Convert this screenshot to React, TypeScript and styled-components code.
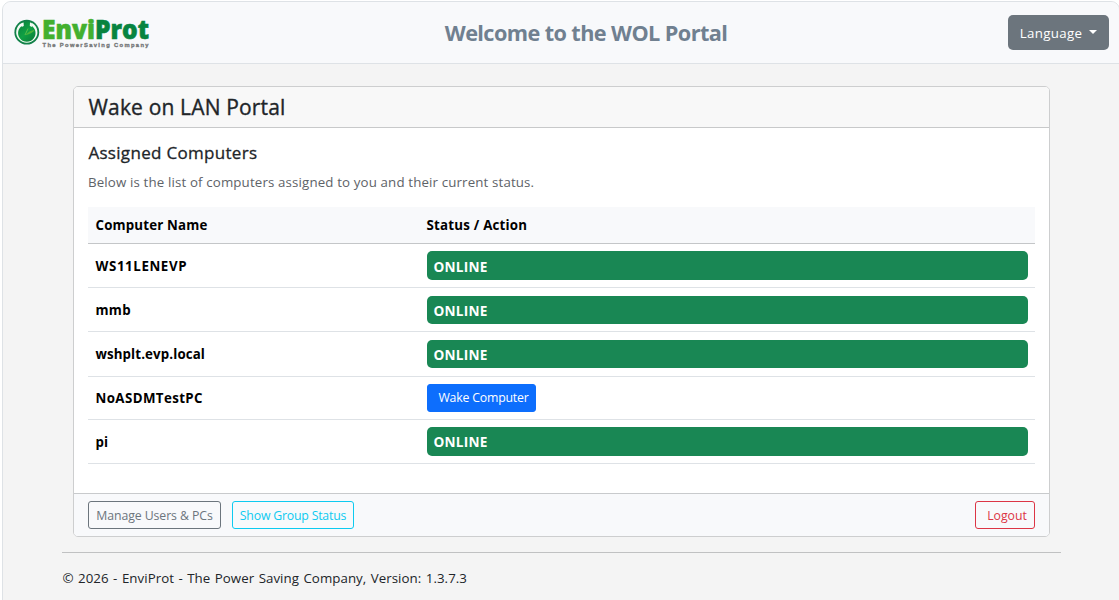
import React from 'react';
import styled, { createGlobalStyle } from 'styled-components';

const Global = createGlobalStyle`
  *, *::before, *::after { box-sizing: border-box; }
  html, body { margin: 0; height: 100%; overflow: hidden; background: #fff; }
  body { font-family: "Segoe UI", "Open Sans", "Noto Sans", sans-serif; font-size: 13.3px; color: #212529; }
  h1, h2, h3, p { margin: 0; white-space: nowrap; }
`;

const Page = styled.div`
  margin: 1px 0 0 2px;
  width: 1118px;
  height: 620px;
  border: 1px solid #dee2e6;
  border-radius: 9px;
  background: #f4f4f4;
  overflow: hidden;
`;

const TopBar = styled.header`
  display: grid;
  grid-template-columns: 200px 1fr 150px;
  align-items: center;
  height: 62px;
  padding: 0 10px 0 11px;
  background: #f8f9fb;
  border-bottom: 1px solid #dee2e6;
`;

const Welcome = styled.h1`
  justify-self: center;
  margin-left: -1px;
  font-size: 21.7px;
  line-height: 30px;
  font-weight: 700;
  letter-spacing: -0.6px;
  color: #708090;
`;

const LanguageButton = styled.button`
  justify-self: end;
  display: flex;
  align-items: center;
  justify-content: center;
  gap: 7px;
  width: 101px;
  height: 35px;
  padding: 0;
  border: 0;
  border-radius: 5px;
  background: #6c757d;
  color: #fff;
  font: 400 13.3px "Segoe UI", "Open Sans", sans-serif;
  letter-spacing: 0.32px;
  &::after {
    content: '';
    border: 4px solid transparent;
    border-top-color: #fff;
    border-bottom: 0;
    margin-bottom: 2px;
  }
`;

const Card = styled.main`
  display: flex;
  flex-direction: column;
  width: 977px;
  height: 451px;
  margin: 22px 0 0 70px;
  border: 1px solid #cdcecf;
  border-radius: 5px;
  background: #fff;
  overflow: hidden;
`;

const CardHeader = styled.div`
  height: 41px;
  padding: 0 14px;
  border-bottom: 1px solid #c8c9ca;
  background: #f8f8f8;
`;

const CardTitle = styled.h2`
  padding-left: 0.5px;
  font-size: 21px;
  line-height: 40px;
  font-weight: 500;
  letter-spacing: 0.16px;
  -webkit-text-stroke: 0.35px currentColor;
`;

const CardBody = styled.div`
  flex: 1;
  padding: 12px 14px 0;
`;

const Subtitle = styled.h3`
  padding-left: 0.4px;
  font-size: 17px;
  line-height: 26px;
  font-weight: 500;
  letter-spacing: 0.31px;
  -webkit-text-stroke: 0.3px currentColor;
`;

const Hint = styled.p`
  margin-top: 6px;
  line-height: 20px;
  color: #5e6368;
  letter-spacing: 0.14px;
`;

const Table = styled.div`
  margin-top: 15px;
  font-weight: 700;
  color: #000;
`;

const Row = styled.div<{ $height: number; $head?: boolean }>`
  display: grid;
  grid-template-columns: 331px 1fr;
  align-items: center;
  height: ${p => p.$height}px;
  padding: 0 7px;
  border-bottom: 1px solid ${p => (p.$head ? '#c4c6c8' : '#dee2e6')};
  background: ${p => (p.$head ? '#f8f9fb' : '#fff')};
  white-space: nowrap;
`;

const Cell = styled.span<{ $spacing?: number }>`
  padding-left: 0.5px;
  line-height: 20px;
  letter-spacing: ${p => p.$spacing ?? 0}px;
`;

const OnlineBar = styled.div<{ $height: number; $inset: number }>`
  height: ${p => p.$height}px;
  margin-left: 1px;
  padding-left: 6.5px;
  padding-top: ${p => p.$inset}px;
  border-radius: 5px;
  background: #198754;
  color: #fff;
  line-height: 25px;
  font-size: 13.6px;
  letter-spacing: 0.25px;
`;

const SmallButton = styled.button<{ $color: string; $width: number; $shift?: number; $filled?: boolean; $spacing?: number }>`
  width: ${p => p.$width}px;
  height: 28px;
  padding: 0 0 0 ${p => p.$shift ?? 0}px;
  border: 1px solid ${p => p.$color};
  border-radius: 3px;
  background: ${p => (p.$filled ? p.$color : 'transparent')};
  color: ${p => (p.$filled ? '#fff' : p.$color)};
  font: 400 12.3px "Segoe UI", "Open Sans", sans-serif;
  letter-spacing: ${p => p.$spacing ?? -0.2}px;
  white-space: nowrap;
`;

const WakeButton = styled(SmallButton)`
  margin-left: 1px;
  padding-bottom: 2px;
`;

const CardFooter = styled.div`
  display: flex;
  gap: 11px;
  height: 43px;
  padding: 7px 14px 0;
  border-top: 1px solid #c8cacc;
  background: #f8f9fb;
  & > :last-child { margin-left: auto; }
`;

const PageFooter = styled.footer`
  width: 999px;
  margin: 15px 0 0 59px;
  padding: 15px 0 0 0.5px;
  border-top: 1px solid #c0c1c2;
  line-height: 20px;
  letter-spacing: 0.05px;
  word-spacing: 0.94px;
`;

const LogoSvg = styled.svg`
  display: block;
  overflow: visible;
`;

const Logo = () => (
  <LogoSvg width="140" height="36" viewBox="14 14 140 36">
    <defs>
      <linearGradient id="disc" x1="0" y1="0" x2="1" y2="1">
        <stop offset="0" stopColor="#087b3c" />
        <stop offset="0.5" stopColor="#10a044" />
        <stop offset="1" stopColor="#087337" />
      </linearGradient>
    </defs>
    <circle cx="26.8" cy="31.2" r="12.4" fill="#12804a" />
    <circle cx="26.8" cy="31.2" r="10.8" fill="url(#disc)" />
    <path d="M21.6 22 A10.6 10.6 0 1 0 32 22 L30.6 24.2 A8.7 8.7 0 1 1 23 24.2 Z" fill="#f4faf5" />
    <path d="M21.8 22 L23.6 21.6 L23.8 25 L21.6 26 Z M31.8 22 L30 21.6 L29.8 25 L32 26 Z" fill="#f4faf5" />
    <path d="M25.2 34.2 Q29 29.8 34.8 28.8 Q32.8 32.8 25.2 34.2" fill="#4db33a" />
    <path d="M25 34 L28 27.6" stroke="#73c94a" strokeWidth="0.7" />
    <text x="42" y="38.4" fontFamily="Open Sans, sans-serif" fontSize="26.5" fontWeight="800" strokeWidth="0.6" textLength="107" lengthAdjust="spacingAndGlyphs">
      <tspan fill="#43b02f" stroke="#43b02f">Envi</tspan><tspan fill="#078440" stroke="#078440">Prot</tspan>
    </text>
    <text x="42.5" y="46.2" fontFamily="Liberation Sans, sans-serif" fontSize="5.8" fontWeight="700" fill="#77797a" stroke="#77797a" strokeWidth="0.35" textLength="106" lengthAdjust="spacing">
      The PowerSaving Company
    </text>
  </LogoSvg>
);

const computers = [
  { name: 'WS11LENEVP', online: true, height: 44, bar: 29, inset: 3, spacing: 0.6 },
  { name: 'mmb', online: true, height: 44, bar: 28, inset: 2, spacing: 0.3 },
  { name: 'wshplt.evp.local', online: true, height: 45, bar: 28, inset: 2, spacing: 0.12 },
  { name: 'NoASDMTestPC', online: false, height: 43, bar: 28, inset: 2, spacing: 0.4 },
  { name: 'pi', online: true, height: 44, bar: 29, inset: 2, spacing: 0 },
];

export default function App() {
  return (
    <>
      <Global />
      <Page>
        <TopBar>
          <Logo />
          <Welcome>Welcome to the WOL Portal</Welcome>
          <LanguageButton>Language</LanguageButton>
        </TopBar>
        <Card>
          <CardHeader><CardTitle>Wake on LAN Portal</CardTitle></CardHeader>
          <CardBody>
            <Subtitle>Assigned Computers</Subtitle>
            <Hint>Below is the list of computers assigned to you and their current status.</Hint>
            <Table>
              <Row $height={37} $head>
                <Cell $spacing={0.17}>Computer Name</Cell>
                <Cell $spacing={0.22}>Status / Action</Cell>
              </Row>
              {computers.map(c => (
                <Row key={c.name} $height={c.height}>
                  <Cell $spacing={c.spacing}>{c.name}</Cell>
                  {c.online ? (
                    <OnlineBar $height={c.bar} $inset={c.inset}>ONLINE</OnlineBar>
                  ) : (
                    <WakeButton $color="#0d6efd" $width={109} $shift={4} $filled>Wake Computer</WakeButton>
                  )}
                </Row>
              ))}
            </Table>
          </CardBody>
          <CardFooter>
            <SmallButton $color="#6c757d" $width={133} $spacing={-0.08}>Manage Users &amp; PCs</SmallButton>
            <SmallButton $color="#0dcaf0" $width={122}>Show Group Status</SmallButton>
            <SmallButton $color="#dc3545" $width={60} $shift={4} $spacing={-0.05}>Logout</SmallButton>
          </CardFooter>
        </Card>
        <PageFooter>© 2026 - EnviProt - The Power Saving Company, Version: 1.3.7.3</PageFooter>
      </Page>
    </>
  );
}
